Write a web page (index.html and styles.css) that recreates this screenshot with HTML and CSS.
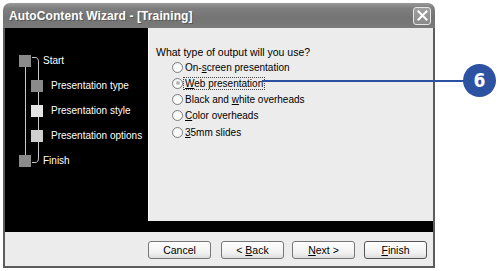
FILE: index.html
```html
<!DOCTYPE html>
<html>
<head>
<meta charset="utf-8">
<link rel="stylesheet" href="styles.css">
</head>
<body>
<div class="window">
  <div class="titlebar">
    <span class="title">AutoContent Wizard - [Training]</span>
    <span class="close">
      <svg width="11" height="11" viewBox="0 0 11 11"><path d="M1.5 1.5 L9.5 9.5 M9.5 1.5 L1.5 9.5" stroke="#fff" stroke-width="2" stroke-linecap="square"/></svg>
    </span>
  </div>
  <div class="main">
    <div class="steps">
      <svg class="tree" width="40" height="140" viewBox="0 0 40 140">
        <path d="M20.5 38 V127" stroke="#c8c8c8" stroke-width="1" fill="none"/>
        <path d="M27 29.5 H30 Q33.5 29.5 33.5 34 V130 Q33.5 134.5 30 134.5 H27" stroke="#c8c8c8" stroke-width="1" fill="none"/>
      </svg>
      <div class="step top"><span class="sq dark"></span><span class="lbl">Start</span></div>
      <div class="step sub"><span class="sq dark"></span><span class="lbl">Presentation type</span></div>
      <div class="step sub"><span class="sq light"></span><span class="lbl">Presentation style</span></div>
      <div class="step sub"><span class="sq mid"></span><span class="lbl">Presentation options</span></div>
      <div class="step top"><span class="sq dark"></span><span class="lbl">Finish</span></div>
    </div>
    <div class="content">
      <div class="question">What type of output will you use?</div>
      <div class="options">
        <div class="opt"><span class="radio"></span><span class="olbl">On-<u>s</u>creen presentation</span></div>
        <div class="opt"><span class="radio on"></span><span class="olbl focus"><u>W</u>eb presentation</span></div>
        <div class="opt"><span class="radio"></span><span class="olbl">Black and <u>w</u>hite overheads</span></div>
        <div class="opt"><span class="radio"></span><span class="olbl"><u>C</u>olor overheads</span></div>
        <div class="opt"><span class="radio"></span><span class="olbl"><u>3</u>5mm slides</span></div>
      </div>
    </div>
  </div>
  <div class="footer">
    <button class="btn cancel">Cancel</button>
    <button class="btn back">&lt; <u>B</u>ack</button>
    <button class="btn next"><u>N</u>ext &gt;</button>
    <button class="btn finish"><u>F</u>inish</button>
  </div>
</div>
<div class="callout-line"></div>
<div class="callout">6</div>
</body>
</html>
```
FILE: styles.css
```css
html, body {
  margin: 0;
  padding: 0;
  background: #ffffff;
  width: 500px;
  height: 271px;
  overflow: hidden;
  font-family: "Liberation Sans", Arial, sans-serif;
}
.window {
  position: relative;
  margin: 3px 0 0 3px;
  width: 432px;
}
.titlebar {
  height: 25px;
  border-radius: 7px 7px 0 0;
  background: linear-gradient(#9a9a9a 0%, #7e7e7e 20%, #747474 60%, #7a7a7a 100%);
  display: flex;
  align-items: center;
  justify-content: space-between;
  padding: 0 4px 0 6px;
}
.title {
  color: #ffffff;
  font-weight: bold;
  font-size: 12px;
  letter-spacing: 0.1px;
  text-shadow: 1px 1px 0 #555;
}
.close {
  width: 16px;
  height: 16px;
  border: 1px solid #e6e6e6;
  border-radius: 3px;
  background: linear-gradient(#a0a0a0, #8a8a8a);
  display: flex;
  align-items: center;
  justify-content: center;
}
.main {
  display: flex;
  background: #000000;
  height: 204px;
  border-left: 2px solid #5c5c5c;
  border-right: 2px solid #5c5c5c;
}
.steps {
  position: relative;
  width: 143px;
  flex: none;
  padding-top: 20px;
  color: #ffffff;
  font-size: 10px;
}
.tree {
  position: absolute;
  left: 0;
  top: 0;
}
.step {
  position: relative;
  height: 25px;
  display: flex;
  align-items: center;
  white-space: nowrap;
}
.sq {
  width: 12px;
  height: 12px;
  flex: none;
}
.step.top .sq { margin-left: 14px; margin-right: 12px; }
.step.sub .sq { margin-left: 26px; margin-right: 8px; }
.sq.dark { background: #8a8a8a; }
.sq.light { background: #e4e4e4; }
.sq.mid { background: #cfcfcf; }
.content {
  box-sizing: border-box;
  width: 285px;
  flex: none;
  height: 193px;
  background: #ececec;
  border-left: 1px solid #fafafa;
  padding: 17px 0 0 7px;
  font-size: 10.5px;
  color: #000;
}
.question {
  height: 14px;
  line-height: 14px;
}
.options {
  margin-left: 16px;
  font-size: 10px;
}
.opt {
  height: 16.25px;
  display: flex;
  align-items: center;
}
.radio {
  width: 9px;
  height: 9px;
  border: 1px solid #7d7d7d;
  border-radius: 50%;
  background: radial-gradient(circle at 60% 60%, #ffffff 40%, #e2e2e2 100%);
  position: relative;
  flex: none;
}
.radio.on::after {
  content: "";
  position: absolute;
  left: 2.5px;
  top: 2.5px;
  width: 4px;
  height: 4px;
  border-radius: 50%;
  background: #b5b5b5;
}
.olbl {
  padding: 0 1px;
  border: 1px solid transparent;
  line-height: 11px;
}
.olbl.focus {
  border: 1px dotted #444;
}
.footer {
  box-sizing: border-box;
  height: 36px;
  background: #ececec;
  border-left: 2px solid #5c5c5c;
  border-right: 2px solid #5c5c5c;
  border-bottom: 2px solid #5c5c5c;
  display: flex;
  align-items: flex-start;
  padding-top: 9px;
}
.btn {
  width: 63px;
  height: 18px;
  padding: 0;
  border: 1px solid #777;
  border-radius: 3px;
  background: linear-gradient(#ffffff, #f0f0f0 70%, #dcdcdc);
  font-family: "Liberation Sans", Arial, sans-serif;
  font-size: 10.5px;
  color: #000;
}
.cancel { margin-left: 143px; }
.back { margin-left: 10px; }
.next { margin-left: 8px; }
.finish { margin-left: 9px; border-color: #555; }
.callout-line {
  position: absolute;
  left: 262px;
  top: 80px;
  width: 204px;
  height: 2px;
  background: #2d50a0;
}
.callout {
  position: absolute;
  left: 463px;
  top: 64px;
  width: 33px;
  height: 33px;
  border-radius: 50%;
  background: #2d52a2;
  color: #ffffff;
  font-family: "DejaVu Sans Condensed", "Liberation Sans Narrow", sans-serif;
  font-weight: bold;
  font-size: 19px;
  line-height: 33px;
  text-align: center;
}
```
